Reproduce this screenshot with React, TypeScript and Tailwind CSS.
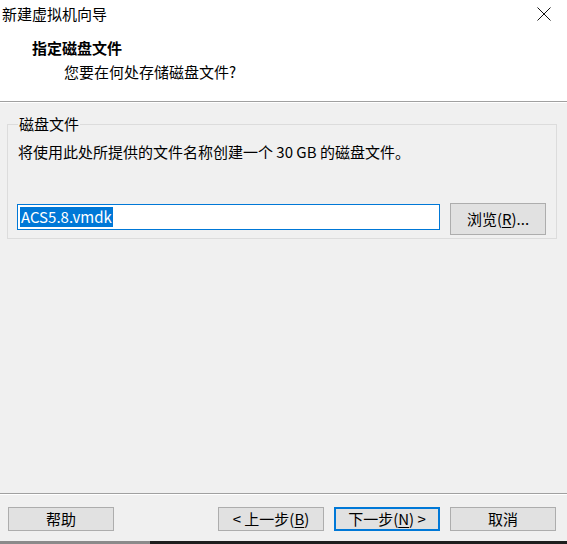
import type { ReactElement } from "react";

const font = "font-['Noto_Sans_CJK_SC','Noto_Sans',sans-serif]";

const WinButton = ({
  children,
  primary = false,
  className = "",
}: {
  children: React.ReactNode;
  primary?: boolean;
  className?: string;
}): ReactElement => (
  <div
    className={`flex items-center justify-center bg-[#e1e1e1] text-[15px] leading-[20px] text-black ${
      primary ? "border-2 border-[#0078d7]" : "border border-[#adadad]"
    } ${className}`}
  >
    {children}
  </div>
);

const App = (): ReactElement => {
  return (
    <div className={`w-[567px] h-[544px] flex flex-col bg-[#f0f0f0] ${font} text-black`}>
      {/* Title bar */}
      <div className="h-[29px] bg-white flex items-center justify-between pl-[2px] pr-[16px]">
        <span className="text-[15px] leading-[20px] -mt-[1px]">新建虚拟机向导</span>
        <svg width="14" height="14" viewBox="0 0 14 14" className="-mt-[1px]">
          <path d="M0.5 0.5 L13.5 13.5 M13.5 0.5 L0.5 13.5" stroke="#111" strokeWidth="1" fill="none" />
        </svg>
      </div>

      {/* Header */}
      <div className="h-[72px] bg-white flex flex-col pt-[9px]">
        <div className="pl-[32px] text-[15px] leading-[20px] font-bold">指定磁盘文件</div>
        <div className="pl-[64px] mt-[4px] text-[15px] leading-[20px]">您要在何处存储磁盘文件?</div>
      </div>
      <div className="h-[1px] bg-[#a0a0a0]" />
      <div className="h-[1px] bg-white" />

      {/* Body */}
      <div className="flex-1">
        <fieldset className="ml-[7px] mt-[11px] w-[550px] border border-[#dcdcdc] pl-[9px] pr-[10px] pt-[8px] pb-[3px]">
          <legend className="ml-[1px] px-[1px] text-[15px] leading-[20px]">磁盘文件</legend>
          <div className="ml-[1px] text-[15px] leading-[20px]">
            将使用此处所提供的文件名称创建一个 30 GB 的磁盘文件。
          </div>
          <div className="mt-[41px] flex items-start gap-[10px]">
            <div className="mt-[1px] w-[423px] h-[26px] bg-white border border-[#0078d7] flex items-center pl-[2px]">
              <span className="bg-[#0078d7] text-white text-[15px] leading-[20px] px-[1px]">ACS5.8.vmdk</span>
            </div>
            <WinButton className="w-[96px] h-[32px]">
              浏览(<span className="underline underline-offset-2">R</span>)...
            </WinButton>
          </div>
        </fieldset>
      </div>

      {/* Footer */}
      <div className="h-[1px] bg-[#a0a0a0]" />
      <div className="h-[1px] bg-white" />
      <div className="flex justify-between pl-[8px] pr-[11px] pt-[12px] pb-[10px]">
        <WinButton className="w-[106px] h-[24px]">帮助</WinButton>
        <div className="flex gap-[10px]">
          <WinButton className="w-[106px] h-[24px]">
            &lt; 上一步(<span className="underline underline-offset-2">B</span>)
          </WinButton>
          <WinButton primary className="w-[106px] h-[24px]">
            下一步(<span className="underline underline-offset-2">N</span>) &gt;
          </WinButton>
          <WinButton className="w-[106px] h-[24px]">取消</WinButton>
        </div>
      </div>
      <div className="flex h-[3px]">
        <div className="w-[150px] bg-[#8a8a8a]" />
        <div className="flex-1 bg-[#1e1e1e]" />
      </div>
    </div>
  );
};

export default App;
